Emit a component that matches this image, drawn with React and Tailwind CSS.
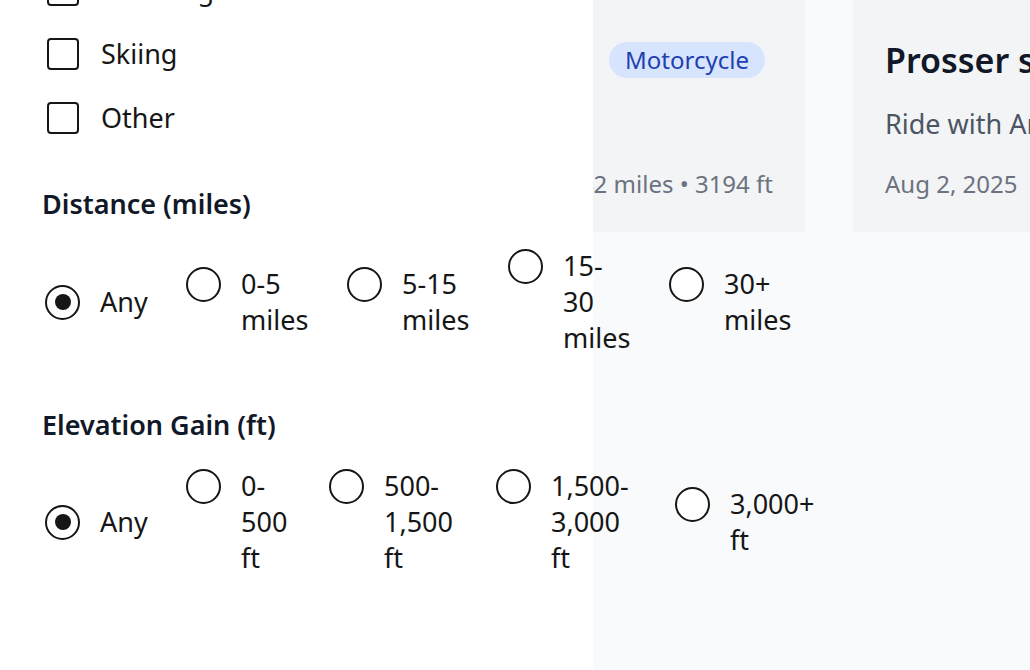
import React from 'react';

const activities = ['Climbing', 'Skiing', 'Other'];

const distance = [
  { lines: ['Any'], checked: true, w: 'w-[48px]' },
  { lines: ['0-5', 'miles'], w: 'w-[68px]' },
  { lines: ['5-15', 'miles'], w: 'w-[68px]' },
  { lines: ['15-', '30', 'miles'], w: 'w-[68px]' },
  { lines: ['30+', 'miles'], w: 'w-[68px]' },
];

const elevation = [
  { lines: ['Any'], checked: true, w: 'w-[48px]' },
  { lines: ['0-', '500', 'ft'], w: 'w-[50px]' },
  { lines: ['500-', '1,500', 'ft'], w: 'w-[74px]' },
  { lines: ['1,500-', '3,000', 'ft'], w: 'w-[86px]' },
  { lines: ['3,000+', 'ft'], w: 'w-[92px]' },
];

function Checkbox({ label }) {
  return (
    <label className="flex items-center h-9 gap-[22px]">
      <span className="ml-[5px] w-8 h-8 rounded-[4px] border-2 border-[#161616] bg-white shrink-0" />
      <span className="text-[27px] leading-9 text-[#161616]">{label}</span>
    </label>
  );
}

function Radio({ lines, checked, w }) {
  return (
    <label className="flex items-start gap-5 shrink-0">
      <span className="h-9 flex items-center">
        <span className="w-[35px] h-[35px] rounded-full border-2 border-[#161616] bg-white flex items-center justify-center">
          {checked && <span className="w-4 h-4 rounded-full bg-[#161616]" />}
        </span>
      </span>
      <span className={`${w} flex flex-col text-[27px] leading-9 text-[#161616] whitespace-nowrap`}>
        {lines.map((l) => (
          <span key={l}>{l}</span>
        ))}
      </span>
    </label>
  );
}

function RadioRow({ options }) {
  return (
    <div className="flex items-center gap-[38px] ml-[3px]">
      {options.map((o, i) => (
        <Radio key={i} lines={o.lines} checked={o.checked} w={o.w} />
      ))}
    </div>
  );
}

function Card({ title, subtitle, date, stats, badge }) {
  return (
    <div className="w-[420px] shrink-0 bg-[#f3f4f6] px-8 pb-8 pt-[86px] flex flex-col">
      <div className="flex items-center justify-between gap-4">
        <h3 className="text-[34px] leading-[44px] font-semibold text-[#111827] whitespace-nowrap">{title}</h3>
        {badge && (
          <span className="mr-2 shrink-0 rounded-full bg-[#d6e4fd] px-4 py-1 text-[24px] leading-7 text-[#1e40af]">{badge}</span>
        )}
      </div>
      <p className="mt-6 text-[27px] leading-9 text-[#4b5563] whitespace-nowrap">{subtitle}</p>
      <div className="mt-[26px] flex justify-between gap-6 text-[24px] leading-8 text-[#6b7280] whitespace-nowrap">
        <span>{date}</span>
        <span>{stats}</span>
      </div>
    </div>
  );
}

export default function App() {
  return (
    <div className="relative w-[1030px] h-[670px] overflow-hidden bg-[#f9fafb] font-['Noto_Sans',sans-serif]">
      <div className="flex gap-12 pl-[385px] -mt-[48px]">
        <Card title="Blewett" subtitle="Loop ride" date="Jul 28, 2025" stats="42 miles • 3194 ft" badge="Motorcycle" />
        <Card title="Prosser sunset ride" subtitle="Ride with Andy and crew" date="Aug 2, 2025" stats="38 miles • 1210 ft" />
      </div>

      <aside className="absolute inset-y-0 left-0 w-[593px] bg-white px-[42px]">
        <div className="-mt-[28px] flex flex-col gap-7">
          {activities.map((a) => (
            <Checkbox key={a} label={a} />
          ))}
        </div>

        <h2 className="mt-[50px] text-[27px] leading-9 font-semibold text-[#111827]">Distance (miles)</h2>
        <div className="mt-[26px]">
          <RadioRow options={distance} />
        </div>

        <h2 className="mt-[51px] text-[27px] leading-9 font-semibold text-[#111827]">Elevation Gain (ft)</h2>
        <div className="mt-[25px]">
          <RadioRow options={elevation} />
        </div>
      </aside>
    </div>
  );
}
